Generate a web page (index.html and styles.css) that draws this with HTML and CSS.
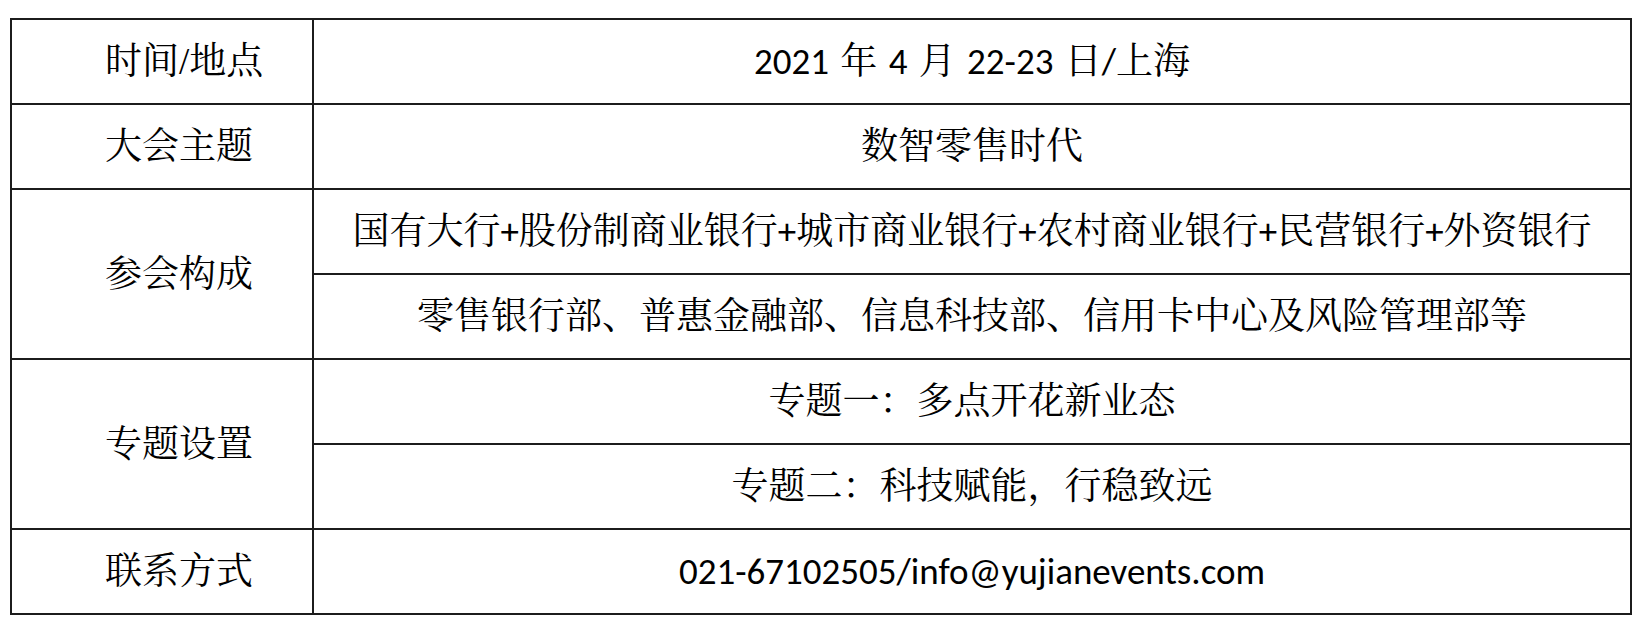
FILE: index.html
```html
<!DOCTYPE html>
<html lang="zh-CN">
<head>
<meta charset="utf-8">
<title>大会信息</title>
<link rel="stylesheet" href="styles.css">
</head>
<body>
<table class="info">
  <tbody>
    <tr>
      <th class="label">时间/地点</th>
      <td class="value">2021 年 4 月 22-23 日/上海</td>
    </tr>
    <tr>
      <th class="label">大会主题</th>
      <td class="value">数智零售时代</td>
    </tr>
    <tr>
      <th class="label" rowspan="2">参会构成</th>
      <td class="value">国有大行+股份制商业银行+城市商业银行+农村商业银行+民营银行+外资银行</td>
    </tr>
    <tr>
      <td class="value">零售银行部、普惠金融部、信息科技部、信用卡中心及风险管理部等</td>
    </tr>
    <tr>
      <th class="label" rowspan="2">专题设置</th>
      <td class="value">专题一：多点开花新业态</td>
    </tr>
    <tr>
      <td class="value">专题二：科技赋能，行稳致远</td>
    </tr>
    <tr>
      <th class="label">联系方式</th>
      <td class="value">021-67102505/info@yujianevents.com</td>
    </tr>
  </tbody>
</table>
</body>
</html>
```

FILE: styles.css
```css
html, body {
  margin: 0;
  padding: 0;
  background: #ffffff;
}

body {
  padding: 18px 0 0 10px;
  font-family: Carlito, Lato, "Noto Serif CJK SC", "Noto Sans CJK SC", sans-serif;
  color: #000;
}

.info {
  border-collapse: collapse;
  width: 1622px;
  table-layout: fixed;
}

.info th,
.info td {
  border: 2px solid #1c1c1c;
  height: 83px;
  padding: 0;
  font-size: 37px;
  font-weight: normal;
  line-height: 1;
  vertical-align: middle;
}

.label {
  width: 302px;
  text-align: left;
  padding-left: 93px !important;
  box-sizing: border-box;
  font-family: "Liberation Serif", "Noto Serif CJK SC", "Noto Sans CJK SC", serif;
}

.value {
  text-align: center;
  word-spacing: 3px;
}
```
